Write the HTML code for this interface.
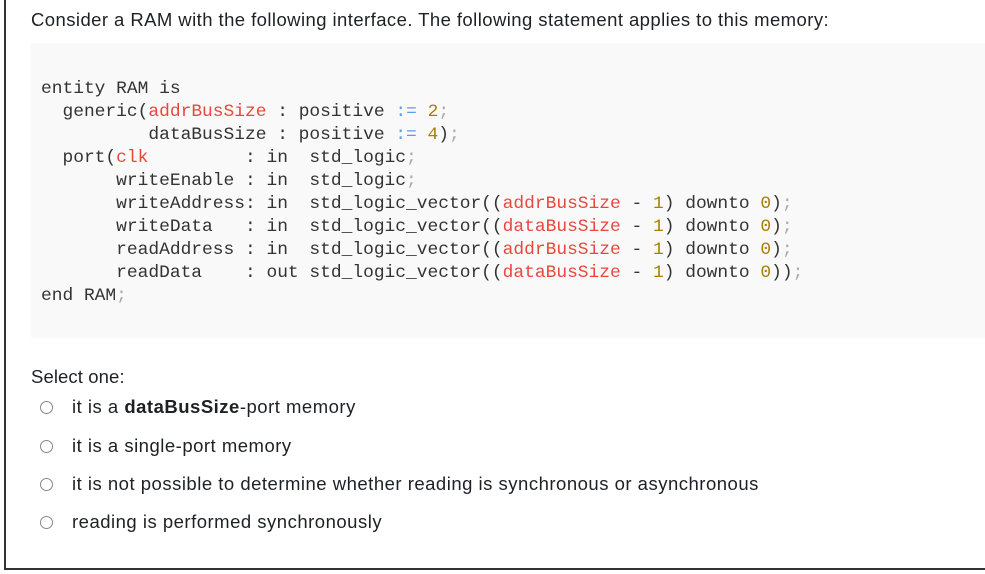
<!DOCTYPE html>
<html><head><meta charset="utf-8"><style>
html,body{margin:0;padding:0;background:#fff;}
body{width:985px;height:574px;position:relative;overflow:hidden;font-family:"Liberation Sans",sans-serif;color:#1d2125;}
.frame{position:absolute;left:4px;top:-2px;width:990px;height:572px;border-left:2px solid #333;border-bottom:2px solid #333;box-sizing:border-box;}
.q{position:absolute;left:31px;top:9px;font-size:18.5px;letter-spacing:0.43px;}
.code{position:absolute;left:31px;top:43px;width:960px;height:295px;background:#f9f9f9;}
pre{position:absolute;left:41px;top:78px;margin:0;font-family:"Liberation Mono",monospace;font-size:17.9px;line-height:23px;color:#333;}
.r{color:#e8483c}.n{color:#a87d06}.b{color:#5b9be8}.s{color:#aaa}
.sel{position:absolute;left:31px;top:366px;font-size:18.5px;letter-spacing:0.1px;}
.opt{position:absolute;left:72px;font-size:18.5px;letter-spacing:0.5px;}
.rad{position:absolute;left:40px;width:11px;height:11px;border:1.3px solid #888;border-radius:50%;}
</style></head><body>
<div class="frame"></div>
<div class="q">Consider a RAM with the following interface. The following statement applies to this memory:</div>
<div class="code"></div>
<pre>entity RAM is
  generic(<span class="r">addrBusSize</span> : positive <span class="b">:=</span> <span class="n">2</span><span class="s">;</span>
          dataBusSize : positive <span class="b">:=</span> <span class="n">4</span>)<span class="s">;</span>
  port(<span class="r">clk</span>         : in  std_logic<span class="s">;</span>
       writeEnable : in  std_logic<span class="s">;</span>
       writeAddress: in  std_logic_vector((<span class="r">addrBusSize</span> - <span class="n">1</span>) downto <span class="n">0</span>)<span class="s">;</span>
       writeData   : in  std_logic_vector((<span class="r">dataBusSize</span> - <span class="n">1</span>) downto <span class="n">0</span>)<span class="s">;</span>
       readAddress : in  std_logic_vector((<span class="r">addrBusSize</span> - <span class="n">1</span>) downto <span class="n">0</span>)<span class="s">;</span>
       readData    : out std_logic_vector((<span class="r">dataBusSize</span> - <span class="n">1</span>) downto <span class="n">0</span>))<span class="s">;</span>
end RAM<span class="s">;</span></pre>
<div class="sel">Select one:</div>
<div class="rad" style="top:401px"></div><div class="opt" style="top:396px">it is a <b>dataBusSize</b>-port memory</div>
<div class="rad" style="top:440px"></div><div class="opt" style="top:435px">it is a single-port memory</div>
<div class="rad" style="top:478px"></div><div class="opt" style="top:473px">it is not possible to determine whether reading is synchronous or asynchronous</div>
<div class="rad" style="top:516px"></div><div class="opt" style="top:511px">reading is performed synchronously</div>
</body></html>
